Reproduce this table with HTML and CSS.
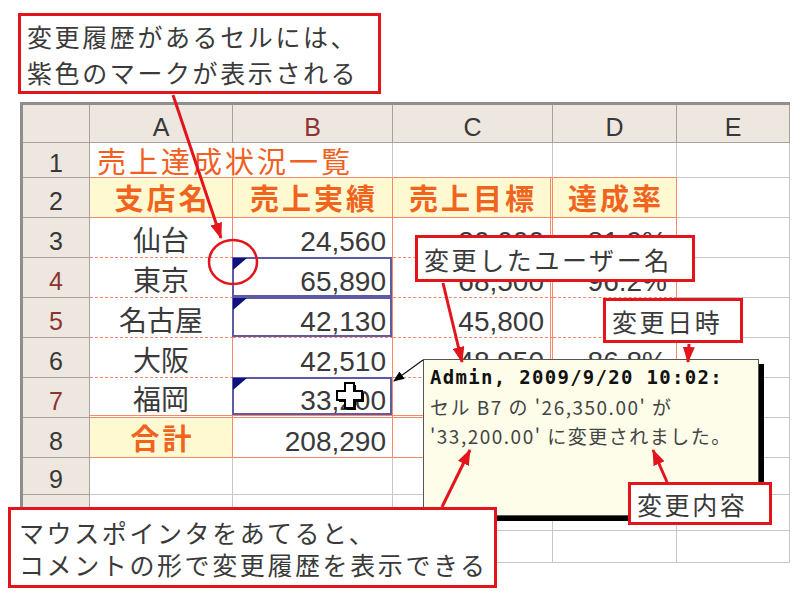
FILE: index.html
```html
<!DOCTYPE html>
<html lang="ja">
<head>
<meta charset="utf-8">
<title>変更履歴</title>
<link rel="stylesheet" href="styles.css">
</head>
<body>
<div class="page">
  <div class="sheet">
    <div class="hd corner"></div>
    <div class="hd">A</div>
    <div class="hd mark">B</div>
    <div class="hd">C</div>
    <div class="hd">D</div>
    <div class="hd">E</div>

    <div class="hd rh">1</div>
    <div class="c title top">売上達成状況一覧</div>
    <div class="c top"></div>
    <div class="c top"></div>
    <div class="c"></div>

    <div class="hd rh">2</div>
    <div class="c t th solid">支店名</div>
    <div class="c t th solid">売上実績</div>
    <div class="c t th solid dbl-r">売上目標</div>
    <div class="c t th solid">達成率</div>
    <div class="c"></div>

    <div class="hd rh">3</div>
    <div class="c t ctr d">仙台</div>
    <div class="c t num d">24,560</div>
    <div class="c t num d dbl-r">30,000</div>
    <div class="c t num d pr">81.9%</div>
    <div class="c"></div>

    <div class="hd rh mark">4</div>
    <div class="c t ctr d">東京</div>
    <div class="c t num d chg">65,890</div>
    <div class="c t num d dbl-r">68,500</div>
    <div class="c t num d pr">96.2%</div>
    <div class="c"></div>

    <div class="hd rh mark">5</div>
    <div class="c t ctr d">名古屋</div>
    <div class="c t num d chg">42,130</div>
    <div class="c t num d dbl-r">45,800</div>
    <div class="c t num d pr"></div>
    <div class="c"></div>

    <div class="hd rh">6</div>
    <div class="c t ctr d">大阪</div>
    <div class="c t num d">42,510</div>
    <div class="c t num d dbl-r">48,950</div>
    <div class="c t num d pr">86.8%</div>
    <div class="c"></div>

    <div class="hd rh mark">7</div>
    <div class="c t ctr d dbl-b">福岡</div>
    <div class="c t num d dbl-b chg">33,200</div>
    <div class="c t num d dbl-b dbl-r"></div>
    <div class="c t num d dbl-b pr"></div>
    <div class="c"></div>

    <div class="hd rh">8</div>
    <div class="c t th solid">合計</div>
    <div class="c t num d solid">208,290</div>
    <div class="c t num d solid dbl-r"></div>
    <div class="c t num d solid pr"></div>
    <div class="c"></div>

    <div class="hd rh">9</div>
    <div class="c"></div><div class="c"></div><div class="c"></div><div class="c"></div><div class="c"></div>

    <div class="hd rh"></div>
    <div class="c"></div><div class="c"></div><div class="c"></div><div class="c"></div><div class="c"></div>

    <div class="hd rh"></div>
    <div class="c"></div><div class="c"></div><div class="c"></div><div class="c"></div><div class="c"></div>
  </div>

  <div class="comment">
    <div class="cm-h">Admin, 2009/9/20 10:02:</div>
    <div class="cm-t">セル B7 の '26,350.00' が</div>
    <div class="cm-t">'33,200.00' に変更されました。</div>
  </div>

  <svg class="overlay" width="800" height="600" viewBox="0 0 800 600">
    <defs>
      <marker id="ar" markerUnits="userSpaceOnUse" markerWidth="16" markerHeight="12" refX="15" refY="6" orient="auto">
        <path d="M0,0 L16,6 L0,12 z" fill="#e3151c"/>
      </marker>
      <marker id="ab" markerUnits="userSpaceOnUse" markerWidth="11" markerHeight="9" refX="10" refY="4.5" orient="auto">
        <path d="M0,0 L11,4.5 L0,9 z" fill="#000"/>
      </marker>
    </defs>
    <ellipse cx="233" cy="262" rx="24" ry="22" fill="none" stroke="#e3151c" stroke-width="2.5"/>
    <g stroke="#e3151c" stroke-width="3" fill="none">
      <line x1="173" y1="95" x2="221" y2="238" marker-end="url(#ar)"/>
      <line x1="443" y1="283" x2="462" y2="362" marker-end="url(#ar)"/>
      <line x1="689" y1="344" x2="688" y2="362" marker-end="url(#ar)"/>
      <line x1="667" y1="482" x2="653" y2="450" marker-end="url(#ar)"/>
      <line x1="442" y1="507" x2="470" y2="450" marker-end="url(#ar)"/>
    </g>
    <line x1="423" y1="360" x2="394" y2="381" stroke="#111" stroke-width="1.2" marker-end="url(#ab)"/>
  </svg>

  <svg class="cursor" width="30" height="30" viewBox="0 0 30 30">
    <path d="M11 3 H20 V11 H28 V20 H20 V28 H11 V20 H3 V11 H11 Z" fill="#000"/>
    <path d="M9 1 H18 V9 H26 V18 H18 V26 H9 V18 H1 V9 H9 Z" fill="#fff" stroke="#000" stroke-width="2"/>
  </svg>

  <div class="callout co-a">
    <div>変更履歴があるセルには、</div>
    <div>紫色のマークが表示される</div>
  </div>
  <div class="callout co-b">変更したユーザー名</div>
  <div class="callout co-c">変更日時</div>
  <div class="callout co-d">変更内容</div>
  <div class="callout co-e">
    <div>マウスポインタをあてると、</div>
    <div>コメントの形で変更履歴を表示できる</div>
  </div>
</div>
</body>
</html>
```

FILE: styles.css
```css
* {
  box-sizing: border-box;
  margin: 0;
  padding: 0;
}

body {
  background: #fff;
  font-family: "Liberation Sans", "Noto Sans CJK JP", sans-serif;
  color: #333;
}

.page {
  position: relative;
  width: 800px;
  height: 600px;
  overflow: hidden;
  padding: 102px 10px 0 20px;
}

.sheet {
  display: grid;
  grid-template-columns: 67px 143px 160px 160px 124px 113px;
  grid-template-rows: 38px 35px repeat(7, 40px) 37px 36px 32px;
  width: 770px;
  border-top: 3px solid #8e8e8e;
  border-left: 3px solid #8e8e8e;
}

.sheet > div {
  display: flex;
  align-items: center;
  border-right: 1px solid #c6c6c6;
  border-bottom: 1px solid #c6c6c6;
  font-size: 28px;
  line-height: 28px;
  white-space: nowrap;
}

.sheet > .hd {
  background: #ede7df;
  border-right-color: #a7a199;
  border-bottom-color: #a7a199;
  justify-content: center;
  font-size: 25px;
  color: #383838;
  padding-top: 6px;
}

.sheet > .hd.mark {
  color: #8a3434;
}

.sheet > .title {
  grid-column: span 2;
  color: #f0601e;
  font-size: 29px;
  letter-spacing: 3px;
  padding: 6px 0 0 7px;
  overflow: visible;
}

.sheet > .top {
  border-bottom-color: #f3896a;
}

.sheet > .t {
  border-right-color: #f3896a;
  border-bottom: 1px dashed #f3896a;
  color: #3a3a3a;
}

.sheet > .t.solid {
  border-bottom-style: solid;
}

.sheet > .t.dbl-b {
  border-bottom: 3px double #f3896a;
}

.sheet > .t.dbl-r {
  border-right: 3px double #f3896a;
}

.sheet > .th {
  background: #fff9d2;
  color: #f0641e;
  font-weight: bold;
  font-size: 29px;
  letter-spacing: 3px;
  justify-content: center;
  padding: 4px 0 0 3px;
}

.sheet > .ctr {
  justify-content: center;
}

.sheet > .num {
  justify-content: flex-end;
  padding-right: 6px;
}

.sheet > .num.pr {
  padding-right: 9px;
}

.sheet > .d {
  padding-top: 8px;
}

.sheet > .chg {
  position: relative;
}

.sheet > .chg::after {
  content: "";
  position: absolute;
  left: -1px;
  top: -1px;
  right: 0;
  bottom: 0;
  border: 2px solid #5b5ba6;
}

.sheet > .chg::before {
  content: "";
  position: absolute;
  left: 0;
  top: 0;
  width: 0;
  height: 0;
  border-top: 12px solid #10107e;
  border-right: 14px solid transparent;
  z-index: 1;
}

.comment {
  position: absolute;
  left: 423px;
  top: 359px;
  width: 336px;
  height: 157px;
  background: #fdfde9;
  border: 1px solid #555;
  box-shadow: 5px 5px 0 #000;
  padding: 2px 0 0 6px;
  z-index: 2;
}

.cm-h {
  font-family: "DejaVu Sans Mono", monospace;
  font-weight: bold;
  font-size: 19px;
  letter-spacing: 1.3px;
  line-height: 30px;
  color: #111;
}

.cm-t {
  font-family: "Noto Sans CJK JP", sans-serif;
  font-size: 19px;
  letter-spacing: 1.5px;
  line-height: 29px;
  color: #444;
}

.overlay {
  position: absolute;
  left: 0;
  top: 0;
  z-index: 3;
}

.cursor {
  position: absolute;
  left: 336px;
  top: 382px;
  z-index: 3;
}

.callout {
  position: absolute;
  background: #fff;
  border: 3px solid #e3151c;
  font-family: "Noto Sans CJK JP", sans-serif;
  font-size: 25px;
  letter-spacing: 2.6px;
  line-height: 36px;
  color: #3a3a3a;
  padding-left: 6px;
  display: flex;
  flex-direction: column;
  justify-content: center;
  z-index: 4;
  white-space: nowrap;
}

.co-a {
  left: 18px;
  top: 13px;
  width: 363px;
  height: 81px;
}

.co-b {
  left: 415px;
  top: 235px;
  width: 280px;
  height: 47px;
}

.co-c {
  left: 603px;
  top: 298px;
  width: 140px;
  height: 45px;
}

.co-d {
  left: 628px;
  top: 482px;
  width: 144px;
  height: 43px;
}

.co-e {
  left: 8px;
  top: 507px;
  width: 489px;
  height: 81px;
  line-height: 32px;
  padding-left: 8px;
}
```
